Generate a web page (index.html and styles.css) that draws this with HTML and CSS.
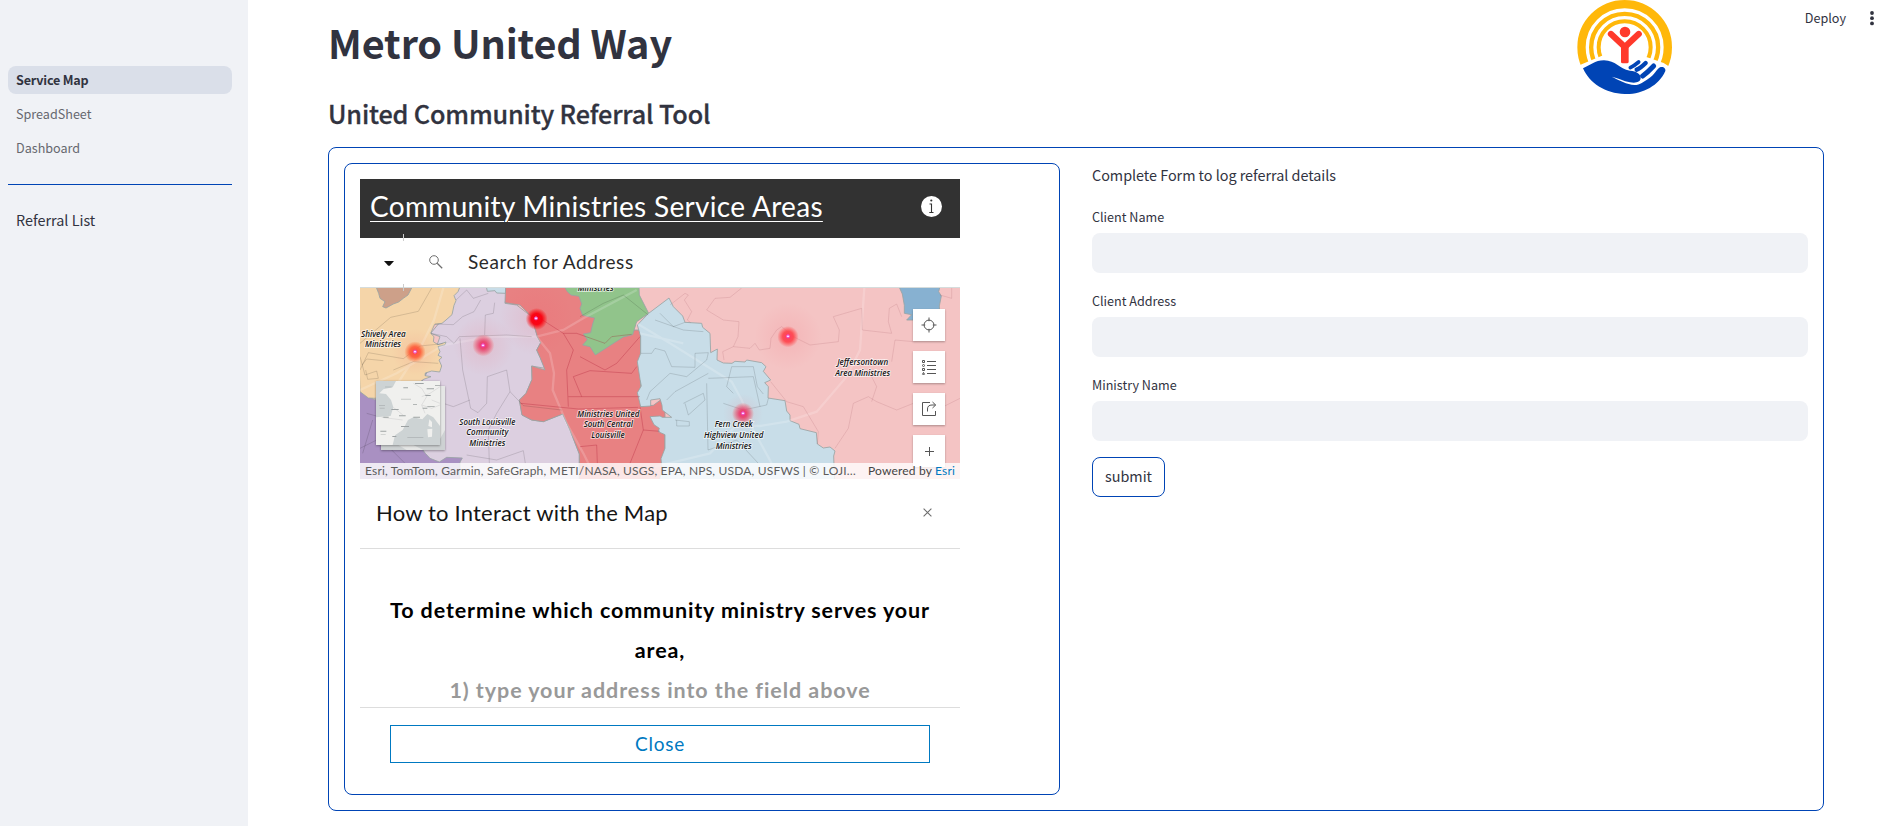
FILE: index.html
```html
<!DOCTYPE html>
<html lang="en">
<head>
<meta charset="utf-8">
<title>Metro United Way</title>
<link rel="stylesheet" href="styles.css">
</head>
<body>
<div class="app">
  <aside class="sidebar">
    <nav class="nav">
      <a class="nav-item active">Service Map</a>
      <a class="nav-item">SpreadSheet</a>
      <a class="nav-item">Dashboard</a>
    </nav>
    <hr class="rule">
    <p class="side-note">Referral List</p>
  </aside>

  <main class="main">
    <header class="top">
      <div class="headings">
        <h1 class="title">Metro United Way</h1>
        <h3 class="subtitle">United Community Referral Tool</h3>
      </div>
      <svg class="logo" viewBox="108 0 292 284" role="img" aria-label="United Way">
        <clipPath id="sky"><path d="M100 0H410V208L385 198L371 189L328 174L254 150L186 167L125 193L100 205Z"/></clipPath>
        <g clip-path="url(#sky)" fill="none" stroke="#ffb80a">
          <circle cx="254" cy="142" r="129.5" stroke-width="25"/>
          <circle cx="254" cy="142" r="100.5" stroke-width="13"/>
          <circle cx="254" cy="142" r="78" stroke-width="12"/>
        </g>
        <circle cx="255" cy="96" r="16" fill="#ff392b"/>
        <path d="M213 102L254.500 141L296 102" fill="none" stroke="#ff392b" stroke-width="19" stroke-linecap="round"/>
        <path d="M243 132H266V185q0 5-5 5h-13q-5 0-5-5Z" fill="#ff392b"/>
        <path d="M129 205C150 196 165 181 192 181C228 181 236 207 270 212C290 214 303 222 302 235C301 247 287 250 270 247C250 244 234 233 215 230C236 240 262 254 283 255C302 255 310 245 325 236C343 226 350 206 362 201C371 199 378 206 376 213C356 258 306 284 254 282C196 281 148 249 129 205Z" fill="#0044b5"/>
        <g fill="none" stroke="#0044b5" stroke-linecap="round">
          <path d="M296 186Q283 197 271 203" stroke-width="11"/>
          <path d="M317 189Q301 205 290 209" stroke-width="13"/>
          <path d="M341 198Q323 217 308 228" stroke-width="15"/>
        </g>
      </svg>
      <div class="toolbar">
        <span>Deploy</span>
        <svg width="6" height="16" viewBox="0 0 6 16" fill="#31333f"><circle cx="3" cy="3" r="1.9"/><circle cx="3" cy="8.2" r="1.9"/><circle cx="3" cy="13.4" r="1.9"/></svg>
      </div>
    </header>

    <section class="panel">
      <div class="map-card">
        <div class="widget">
          <div class="widget-head">
            <a class="widget-title">Community Ministries Service Areas</a>
            <svg class="info" viewBox="0 0 21 21"><circle cx="10.5" cy="10.5" r="10.5" fill="#fff"/><circle cx="10.3" cy="4.5" r="1.1" fill="#323232"/><path d="M8.5 8h2v8.2M8.3 16.5h4.2" fill="none" stroke="#323232" stroke-width="1.1"/></svg>
          </div>
          <div class="search">
            <i class="tick tick-top"></i><i class="tick tick-bottom"></i>
            <svg class="caret" viewBox="0 0 10 5"><path d="M0 0H10L6 4.4Q5 5 4 4.4Z" fill="#111"/></svg>
            <svg class="glass" viewBox="0 0 14 14" fill="none" stroke="#6e6e6e"><circle cx="5" cy="5" r="4.3"/><path d="M8.2 8.2L13.2 13.2" stroke-width="1.3"/></svg>
            <span class="placeholder">Search for Address</span>
          </div>
          <div class="map">
            <svg class="map-art" viewBox="30 354 1800 573">
              <defs>
                <radialGradient id="hot"><stop offset="0" stop-color="#f0307a"/><stop offset=".35" stop-color="#ec3c68" stop-opacity=".9"/><stop offset=".6" stop-color="#ea4468" stop-opacity=".6"/><stop offset="1" stop-color="#f44" stop-opacity="0"/></radialGradient>
                <radialGradient id="hot-red"><stop offset="0" stop-color="#ff0016"/><stop offset=".5" stop-color="#fa0010" stop-opacity=".95"/><stop offset="1" stop-color="#f00" stop-opacity="0"/></radialGradient>
                <radialGradient id="hot-coral"><stop offset="0" stop-color="#ff3a62"/><stop offset=".5" stop-color="#ff454c" stop-opacity=".92"/><stop offset="1" stop-color="#f44" stop-opacity="0"/></radialGradient>
                <radialGradient id="hot-orange"><stop offset="0" stop-color="#ff4545"/><stop offset=".5" stop-color="#ff5a38" stop-opacity=".9"/><stop offset="1" stop-color="#f62" stop-opacity="0"/></radialGradient>
                <radialGradient id="halo"><stop offset="0" stop-color="#f45060" stop-opacity=".13"/><stop offset="1" stop-color="#f45060" stop-opacity="0"/></radialGradient>
              </defs>
              <path fill="#f4c4c4" d="M30 354H1830V927H30Z"/>
              <g stroke="#98a3a3" stroke-width="2.5" stroke-linejoin="round">
                <path fill="#a990c2" d="M20 660L75 690L230 600L350 860L330 880V940H20Z"/>
                <path fill="#dccfe0" d="M315 350H475L465 400L500 405L545 440L562 500L572 518L560 540L570 562L585 595L545 588L546 628L528 670L508 690L516 735L545 750L580 755L638 732L660 780L688 852V940H330V876L337 864L290 862L268 876L240 865L226 850L215 835L180 700L235 600L270 500L242 490L300 420Z"/>
                <path fill="#f5d5a9" d="M20 350H330L324 365L312 377L318 392L312 406L306 434L288 450L276 460L254 463L242 490L252 500L250 515L264 524L288 516L285 524L264 530L270 545L264 556L276 562L267 570L275 588L269 606L245 603L226 609L225 617L243 620L221 628L190 650L140 658L125 675L75 685L55 684L30 665Z"/>
                <path fill="#cda089" d="M78 350H187L174 375L160 385L146 396L130 402L108 414L98 410L105 395L90 385L86 370Z"/>
                <path fill="#c8dde8" d="M409 350H467V370L440 369L435 362L412 364Z"/>
                <path fill="#e88182" d="M467 350H760V480H872V708L910 706L945 680V940H688V852L660 780L638 732L580 755L545 750L516 735L508 690L528 670L546 628L545 588L585 600L570 562L560 540L572 518L562 500L545 440L510 405L465 398Z"/>
                <path fill="#f4c4c4" stroke="none" d="M867 350H960V385L896 430L868 375Z"/>
                <path fill="#91c48b" d="M643 350H867L868 375L896 430L860 455L848 494L820 501L736 555L720 530L698 525L712 509L700 492L722 488L728 462L734 444L698 436L690 415L695 402L687 379L663 375L652 365Z"/>
                <path fill="#c8dde8" d="M862 465L896 430L957 384L970 410L998 438L1005 457L1055 460L1058 472L1080 490L1082 548L1102 537L1101 570L1120 579L1146 580L1155 574L1185 576L1190 570L1235 578L1248 590L1240 604L1262 630L1244 638L1255 650L1254 684L1305 692L1310 723L1320 735V752L1347 763L1350 776L1399 788L1402 822L1420 834L1440 831L1455 843L1451 858L1454 940H925L936 900L933 866L945 835V794L925 785L928 775L912 764L900 740L930 738L937 742L965 742L937 720L936 706L930 686L902 690V708L872 710L862 668L874 648L870 628L862 575L872 550L872 500Z"/>
                <path fill="#87b1d1" d="M1647 350H1770L1766 365L1774 378L1768 408L1770 450H1670L1685 434L1663 430V406L1657 372Z"/>
              </g>
              <!-- pale highways -->
              <g fill="none" stroke="#fff" stroke-width="7" stroke-opacity=".18">
                <path d="M280 354L252 450L205 545L130 660M30 660L140 610L280 525L420 500L560 500L640 480L700 445L860 360M560 500L600 550L612 610L608 660L650 760L700 850L725 900"/>
                <path d="M1543 354L1530 540L1490 620L1400 725L1310 755L1230 768L1160 765L1080 850L915 890M860 460L960 520L1145 635L1175 690L1210 780L1265 880M1000 520L870 490"/>
              </g>
              <!-- district lines -->
              <g fill="none" stroke="#000" stroke-opacity=".13" stroke-width="3">
                <path d="M30 520L122 442L205 424L245 354M30 600L55 548L160 566L210 528L280 521M36 585L50 567L100 572M30 560L45 615L80 603L85 625L53 628L47 600M130 600L190 575L265 580M318 390L350 360L370 385L415 370M243 490L290 500L312 520L328 500L470 495L545 500M330 505L338 600L362 715L384 728L410 700L412 620L470 600L480 665L520 707L635 720M404 495L406 435L430 430L434 398M280 700L310 710L360 690M480 665L440 730L415 780L418 880M350 855L440 870L520 842L526 880M255 462L310 464L338 440L372 425L392 390"/>
                <path d="M30 835L90 805L165 880M50 730L115 748M38 850L68 750"/>
                <path stroke="#a00020" stroke-opacity=".25" d="M512 700L685 717L865 712M670 620L720 602L845 610L860 590M655 680H870M570 445L640 490H680L765 520L785 500L845 493M690 560L765 600L800 580L870 500M670 620L695 680M640 490L670 540L650 600L655 710M690 830L740 825L742 880M870 710L880 780L840 880M880 780L930 784"/>
                <path d="M690 440L760 400L820 375L895 435M873 550H905L915 535L945 543L965 590L1035 592V550L1075 548M890 690L900 665L960 610L1010 620L1070 570L1075 548M950 690L975 665L1075 610M1000 700L1060 670L1065 690L1015 735L1005 700M1070 640L1074 840M1075 625L1210 620L1230 710M1145 590L1210 590L1222 650L1240 672M1005 457L970 470L930 430M915 450L1000 480L1060 485M1120 700L1180 720L1250 705L1255 685M975 750L1018 755V768H980V750M1074 840L1160 810L1225 880M1145 590L1130 650L1150 670"/>
                <path stroke="#803040" d="M960 405L1005 370L1015 375L1003 390L1025 425L1012 450L1022 458M1175 354L1140 382L1095 385L1070 420L1120 450L1167 455L1164 500L1150 530L1200 535L1215 520L1228 540L1260 535L1263 505L1280 480L1295 470L1330 500L1380 525L1465 515L1468 480L1450 440L1535 415L1537 480L1625 490L1615 455L1618 415L1640 402L1655 440M1150 530L1118 545L1122 570M1262 635L1310 695L1360 710L1405 785L1402 822M1455 835L1495 775L1510 700L1555 680L1580 695L1640 720L1690 700L1740 730L1830 685M1625 575L1635 510L1690 515M1555 600L1580 650L1565 695M1770 375L1805 385V354"/>
              </g>
              <g fill="url(#halo)"><circle cx="195" cy="546" r="70"/><circle cx="400" cy="526" r="90"/><circle cx="558" cy="446" r="110"/><circle cx="1314" cy="499" r="100"/><circle cx="1179" cy="731" r="60"/></g>
              <circle cx="195" cy="546" r="32" fill="url(#hot-orange)"/><circle cx="400" cy="526" r="33" fill="url(#hot)"/><circle cx="560" cy="447" r="33" fill="url(#hot-red)"/><circle cx="1314" cy="500" r="32" fill="url(#hot-coral)"/><circle cx="1179" cy="731" r="33" fill="url(#hot)"/>
              <g fill="#fce6ff" stroke="#ef45ca" stroke-width="3"><circle cx="195" cy="545" r="4.500"/><circle cx="399" cy="526" r="4.500"/><circle cx="558" cy="445" r="4.500"/><circle cx="1314" cy="499" r="4.500"/><circle cx="1179" cy="730" r="4.500"/></g>
              <g class="labels">
                <text x="737" y="363" textLength="108" lengthAdjust="spacingAndGlyphs">Ministries</text>
                <text x="100" y="501" textLength="134" lengthAdjust="spacingAndGlyphs">Shively Area</text><text x="99" y="532" textLength="108" lengthAdjust="spacingAndGlyphs">Ministries</text>
                <text x="412" y="764" textLength="168" lengthAdjust="spacingAndGlyphs">South Louisville</text><text x="412" y="796" textLength="126" lengthAdjust="spacingAndGlyphs">Community</text><text x="412" y="828" textLength="108" lengthAdjust="spacingAndGlyphs">Ministries</text>
                <text x="775" y="741" textLength="186" lengthAdjust="spacingAndGlyphs">Ministries United</text><text x="775" y="772" textLength="148" lengthAdjust="spacingAndGlyphs">South Central</text><text x="774" y="804" textLength="100" lengthAdjust="spacingAndGlyphs">Louisville</text>
                <text x="1538" y="585" textLength="153" lengthAdjust="spacingAndGlyphs">Jeffersontown</text><text x="1538" y="617" textLength="165" lengthAdjust="spacingAndGlyphs">Area Ministries</text>
                <text x="1151" y="771" textLength="114" lengthAdjust="spacingAndGlyphs">Fern Creek</text><text x="1151" y="803" textLength="178" lengthAdjust="spacingAndGlyphs">Highview United</text><text x="1151" y="836" textLength="108" lengthAdjust="spacingAndGlyphs">Ministries</text>
              </g>
              <!-- basemap switcher -->
              <g class="thumb"><path fill="#e5e6e5" d="M93 648H285V840H93Z"/><path fill="#cdd1d2" d="M93 825H145L170 840H93ZM190 825H260L285 780V840H220Z"/></g>
              <g class="thumb">
                <path fill="#f0f0ee" d="M78 633H270V825H78Z"/>
                <path fill="#cdd3d4" d="M78 633H138L128 652L100 658L88 670L108 672L123 690L130 712L122 738L78 742ZM128 825L135 796L158 780L174 750L190 742L217 748L232 732L250 742L270 768V825Z"/>
                <path fill="#f0f0ee" d="M238 748L246 756V772L235 768ZM232 778L247 776L246 800L234 802Z"/>
                <path fill="none" stroke="#d4d5d5" stroke-width="2" d="M190 640L215 655L230 680L215 705L225 730M270 650L240 670L215 680M245 690L270 700M215 705L245 715L270 705M95 742L158 750M130 712L160 736"/>
                <g fill="#9da2a3"><path d="M105 650h20v2h-20zM160 652h14v3h-14zM195 639h26v3h-26zM230 655h22v3h-22zM226 675h16v3h-16zM189 702h12v2h-12zM218 713h14v3h-14zM124 717h22v3h-22zM147 736h20v3h-20zM190 740h20v3h-20zM100 740h16v3h-16zM153 768h24v3h-24zM91 782h18v3h-18zM232 708h22v2h-22zM255 645h15v2h-15zM127 798h12v3h-12z"/><path opacity=".5" d="M153 686h30v3h-30zM172 801h48v3h-48zM87 705h18v3h-18zM89 713h15v3h-15zM92 793h15v2h-15z"/></g>
              </g>
            </svg>
            <div class="controls">
              <span class="ctl"><svg viewBox="0 0 16 16"><circle cx="8" cy="8" r="4.9"/><path d="M8 .5V4.2M8 11.8V15.5M.5 8H4.2M11.8 8H15.5"/></svg></span>
              <span class="ctl"><svg viewBox="0 0 16 16"><path d="M6 2.5H15M6 6.5H15M6 10.5H15M6 14.5H15M1.5 1.5h2v2h-2zM1.5 9.5h2v2h-2z"/><circle cx="2.5" cy="6.5" r="1"/><path d="M1.5 15.3L2.5 13.4L3.5 15.3Z"/></svg></span>
              <span class="ctl"><svg viewBox="0 0 16 16"><path d="M9 1.5H1.5V14.5H14.5V10M6.5 10.5V8Q6.5 4 11 4H14.5M11.5 1L14.7 4L11.5 7"/></svg></span>
              <span class="ctl"><svg viewBox="0 0 16 16"><path d="M8.5 4V13M4 8.5H13"/></svg></span>
            </div>
            <div class="attribution"><span class="sources">Esri, TomTom, Garmin, SafeGraph, METI/NASA, USGS, EPA, NPS, USDA, USFWS | © LOJI…</span><span class="powered">Powered by <a>Esri</a></span></div>
          </div>
          <div class="help-head">
            <span>How to Interact with the Map</span>
            <svg width="9" height="9" viewBox="0 0 9 9" stroke="#6e6e6e" stroke-width="1.1"><path d="M.6.6L8.4 8.4M8.4.6L.6 8.4"/></svg>
          </div>
          <div class="help-body">
            <p>To determine which community ministry serves your<br>area,</p>
            <p class="step">1) type your address into the field above</p>
          </div>
          <div class="help-foot"><button class="close">Close</button></div>
        </div>
      </div>

      <form class="form">
        <p class="form-title">Complete Form to log referral details</p>
        <label class="field">Client Name<input type="text"></label>
        <label class="field">Client Address<input type="text"></label>
        <label class="field">Ministry Name<input type="text"></label>
        <button type="button" class="submit">submit</button>
      </form>
    </section>
  </main>
</div>
</body>
</html>
```

FILE: styles.css
```css
* { box-sizing: border-box; }
body { margin: 0; background: #fff; color: #31333f; font-family: "Noto Sans CJK SC", "Noto Sans", sans-serif; font-size: 14.4px; overflow: hidden; }
p, h1, h3 { margin: 0; }
.app { display: flex; height: 826px; }
.sidebar { width: 248px; background: #f0f2f6; padding: 66px 16px 0 8px; flex: none; }
.nav { display: flex; flex-direction: column; gap: 6px; }
.nav-item { height: 28px; line-height: 28px; padding: 0 8px; border-radius: 8px; font-size: 12.6px; color: #66686f; }
.nav-item.active { background: #dadfe9; color: #31333f; font-weight: 700; letter-spacing: -.2px; }
.rule { border: 0; height: 1px; background: #0044b5; margin: 22px 0 23px; }
.side-note { padding-left: 8px; line-height: 24px; }

.main { flex: 1; padding: 0 64px 0 80px; }
.top { display: flex; height: 147px; margin-right: -64px; align-items: flex-start; }
.headings { width: 1248px; padding-top: 15px; }
.title { font-size: 39.6px; line-height: 54px; font-weight: 700; letter-spacing: -.1px; white-space: nowrap; }
.subtitle { font-size: 25.2px; line-height: 34px; font-weight: 500; letter-spacing: -.14px; margin-top: 27px; white-space: nowrap; -webkit-text-stroke: .3px #31333f; }
.logo { width: 97.33px; height: 94.67px; flex: none; }
.toolbar { margin-left: auto; padding: 10px 13px 0 0; display: flex; gap: 23px; align-items: center; font-size: 12.6px; line-height: 16px; }

.panel { width: 1496px; height: 664px; border: 1px solid #0044b5; border-radius: 8px; padding: 15px; display: flex; gap: 32px; }
.map-card { width: 716px; height: 632px; border: 1px solid #0044b5; border-radius: 8px; padding: 15px; flex: none; }
.widget { width: 600px; height: 600px; font-family: Lato, "Open Sans", sans-serif; display: flex; flex-direction: column; }
.widget-head { height: 59px; background: #323232; color: #fff; display: flex; justify-content: space-between; align-items: center; padding: 0 18px 5px 10px; }
.widget-title { font-size: 28px; letter-spacing: .32px; text-decoration: underline; text-decoration-thickness: 1px; text-underline-offset: 4px; white-space: nowrap; }
.info { width: 21px; height: 21px; }
.search { height: 50px; position: relative; display: flex; align-items: center; padding: 0 0 1px 24px; border-bottom: 1px solid #d5dcdc; }
.tick { position: absolute; left: 43px; width: 1px; height: 7px; background: #ccc; }
.tick-top { top: -4px; }
.tick-bottom { bottom: -4px; z-index: 2; }
.caret { width: 10px; height: 5px; margin-top: 2px; }
.glass { width: 14px; height: 14px; margin: 0 25px 0 35px; }
.placeholder { font-size: 19px; letter-spacing: .56px; line-height: 22px; padding-bottom: 1px; color: #2b2b2b; white-space: nowrap; }
.map { height: 191px; position: relative; overflow: hidden; }
.map-art { display: block; width: 600px; height: 191px; }
.labels { font: italic 600 24px "Open Sans", "Noto Sans", sans-serif; text-anchor: middle; fill: #151515; paint-order: stroke; stroke: #fff; stroke-opacity: .7; stroke-width: 5px; }
.thumb { filter: drop-shadow(0 2px 3px rgba(0,0,0,.4)); }
.controls { position: absolute; right: 15px; top: 21px; display: flex; flex-direction: column; gap: 10px; }
.ctl { width: 32px; height: 32px; background: #fff; display: grid; place-items: center; box-shadow: 0 1px 2px rgba(0,0,0,.3); }
.ctl svg { width: 16px; height: 16px; fill: none; stroke: #555; stroke-width: 1; }
.attribution { position: absolute; left: 0; right: 0; bottom: 0; height: 16px; line-height: 16px; background: rgba(255,255,255,.8); display: flex; justify-content: space-between; padding: 0 5px; font-size: 12px; letter-spacing: .18px; color: #5c5c5c; white-space: nowrap; }
.powered { color: #444; }
.attribution a { color: #0079c1; }
.help-head { height: 70px; border-bottom: 1px solid #ddd; display: flex; justify-content: space-between; align-items: center; padding: 0 28px 3px 16px; font-size: 22px; letter-spacing: .2px; color: #151515; }
.help-body { height: 159px; border-bottom: 1px solid #ddd; padding-top: 41px; text-align: center; font-size: 21.5px; letter-spacing: .87px; line-height: 40px; font-weight: 700; color: #000; overflow: hidden; white-space: nowrap; }
.step { color: #999; letter-spacing: .93px; }
.help-foot { padding: 17px 30px 0; }
.close { display: block; width: 540px; height: 38px; border: 1px solid #0079c1; background: #fff; color: #0079c1; font: 19px Lato, sans-serif; letter-spacing: .8px; padding: 0 0 2px; }

.form { width: 716px; display: flex; flex-direction: column; align-items: flex-start; }
.form-title { line-height: 24px; margin-bottom: 18px; letter-spacing: -.03px; }
.field { display: flex; flex-direction: column; width: 716px; margin-bottom: 16px; line-height: 24px; gap: 4px; font-size: 12.6px; }
.field input { height: 40px; border: 0; border-radius: 8px; background: #f0f2f6; }
.submit { height: 40px; width: 73px; border: 1px solid #0044b5; border-radius: 8px; background: #fff; color: #31333f; font: inherit; padding: 0 0 3px; }
```
